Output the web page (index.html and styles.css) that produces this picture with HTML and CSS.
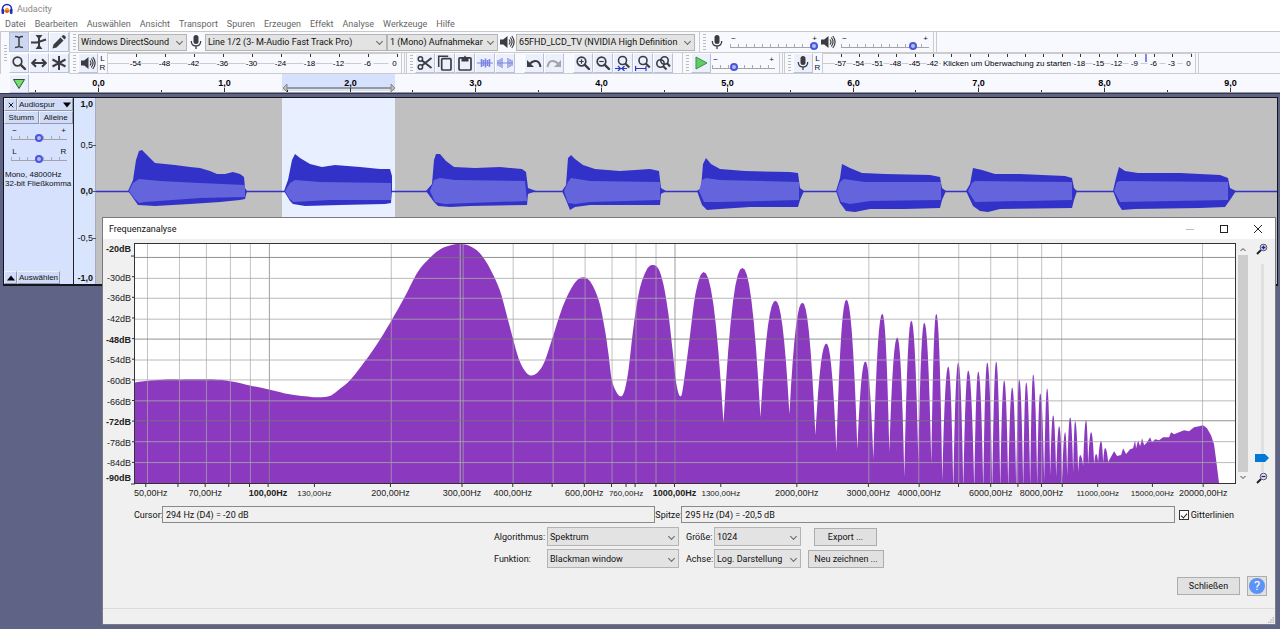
FILE: index.html
```html
<!DOCTYPE html>
<html lang="de">
  <head>
    <meta charset="UTF-8" />
    <title>Audacity</title>
    <link rel="stylesheet" href="styles.css">
  </head>
  <body>
    <svg class="symbols" aria-hidden="true">
      <symbol id="i-text" viewBox="0 0 16 16"><path d="M4 2.500q3 0 4 1.200q1-1.200 4-1.200M4 13.500q3 0 4-1.200q1 1.200 4 1.200M8 3.500v9" fill="none" stroke="currentColor" stroke-width="1.500"/></symbol>
      <symbol id="i-envelope" viewBox="0 0 16 16"><path d="M4.500 1h7L8 5.500zM4.500 15h7L8 10.500z"/><path d="M0 8.500h6l9-3" fill="none" stroke="currentColor" stroke-width="2"/><path d="M8 4v8" stroke="currentColor" stroke-width="2"/></symbol>
      <symbol id="i-pencil" viewBox="0 0 16 16"><path d="M1.500 14.500l1-4 7-7 3 3-7 7zM10.500 2.500l1.300-1.200q.9-.6 1.700.2l1 1q.8.800.1 1.700l-1.200 1.200z"/></symbol>
      <symbol id="i-lens" viewBox="0 0 16 16"><circle cx="6.500" cy="6.500" r="4.300" fill="none" stroke="currentColor" stroke-width="1.700"/><path d="M9.800 9.800l4.200 4.200" stroke="currentColor" stroke-width="2.400" stroke-linecap="round"/></symbol>
      <symbol id="i-shift" viewBox="0 0 16 16"><path d="M1.500 8h13M5 4.200L1.200 8 5 11.800M11 4.200L14.800 8 11 11.800" fill="none" stroke="currentColor" stroke-width="2"/></symbol>
      <symbol id="i-multi" viewBox="0 0 16 16"><path d="M8 1v14M1.500 4.500l13 7M1.500 11.500l13-7" stroke="currentColor" stroke-width="2"/></symbol>
      <symbol id="i-mic" viewBox="0 0 16 16"><rect x="5.500" y="1" width="5" height="9" rx="2.500"/><path d="M3.300 7q0 5 4.700 5t4.700-5M8 12v3" fill="none" stroke="currentColor" stroke-width="1.300"/></symbol>
      <symbol id="i-speaker" viewBox="0 0 16 16"><path d="M1 5.500h3.200L8.500 2v12L4.200 10.500H1z"/><path d="M10 5.500q2 2.500 0 5M11.300 3.500q3.500 4.500 0 9M12.800 2q4.600 6 0 12" fill="none" stroke="currentColor" stroke-width="1.200"/></symbol>
      <symbol id="i-cut" viewBox="0 0 16 16"><path d="M5 5.500l9.500 7.500M5 10.500L14.500 3" stroke="currentColor" stroke-width="1.900"/><circle cx="3.400" cy="4" r="2.200" fill="none" stroke="currentColor" stroke-width="1.500"/><circle cx="3.400" cy="12" r="2.200" fill="none" stroke="currentColor" stroke-width="1.500"/></symbol>
      <symbol id="i-copy" viewBox="0 0 16 16"><path d="M1.700 12V1.200h9.500" fill="none" stroke="currentColor" stroke-width="1.500"/><rect x="4.700" y="3.700" width="9.300" height="11.300" rx="1" fill="none" stroke="currentColor" stroke-width="1.700"/></symbol>
      <symbol id="i-paste" viewBox="0 0 16 16"><rect x="2" y="2.800" width="12" height="12.200" rx="1" fill="none" stroke="currentColor" stroke-width="1.700"/><path d="M4.500 6.500V2.500h2L8 .500l1.500 2h2v4z"/></symbol>
      <symbol id="i-trim" viewBox="0 0 16 16"><path d="M0 8h16" stroke="#7d86e0"/><path d="M4.500 4v8M6.500 5v6M8.500 3.500v9M10.500 5v6M12.500 4v8" stroke="#7d86e0" stroke-width="1.600"/></symbol>
      <symbol id="i-silence" viewBox="0 0 16 16"><path d="M0 8h16" stroke="#7d86e0"/><path d="M1 5v6M3 4v8M5 3v10M11 3v10M13 4v8M15 5v6" stroke="#7d86e0" stroke-width="1.200"/></symbol>
      <symbol id="i-undo" viewBox="0 0 16 16"><path d="M14.500 12Q13.500 5.500 9 6 6 6.300 3 9.500" fill="none" stroke="currentColor" stroke-width="2"/><path d="M1 5v7h7z"/></symbol>
      <symbol id="i-redo" viewBox="0 0 16 16"><path d="M1.500 12Q2.500 5.500 7 6q3 .3 6 3.500" fill="none" stroke="currentColor" stroke-width="2"/><path d="M15 5v7H8z"/></symbol>
      <symbol id="i-zoomin" viewBox="0 0 16 16"><use href="#i-lens"/><path d="M4.300 6.500h4.400M6.500 4.300v4.400" stroke="currentColor" stroke-width="1.200"/></symbol>
      <symbol id="i-zoomout" viewBox="0 0 16 16"><use href="#i-lens"/><path d="M4.300 6.500h4.400" stroke="currentColor" stroke-width="1.200"/></symbol>
      <symbol id="i-zoomsel" viewBox="0 0 16 16"><circle cx="7.500" cy="5.500" r="4" fill="none" stroke="currentColor" stroke-width="1.600"/><path d="M10.300 8.500l4 4" stroke="currentColor" stroke-width="2.200"/><path d="M0 13.500h12M3 11l2.500 2.500L3 16M9.500 11L7 13.500 9.500 16" stroke="#2a35c8" fill="none" stroke-width="1.200"/></symbol>
      <symbol id="i-zoomfit" viewBox="0 0 16 16"><circle cx="8" cy="5.500" r="4" fill="none" stroke="currentColor" stroke-width="1.600"/><path d="M10.800 8.500l4 4" stroke="currentColor" stroke-width="2.200"/><path d="M.6 11v5M11 11v5M1 13.500h10" stroke="#2a35c8" fill="none" stroke-width="1.200"/></symbol>
      <symbol id="i-zoomtoggle" viewBox="0 0 16 16"><circle cx="5.500" cy="8.500" r="3.700" fill="none" stroke="currentColor" stroke-width="1.600"/><circle cx="9.500" cy="5.500" r="3.700" fill="none" stroke="currentColor" stroke-width="1.600"/><path d="M8 11l3.500 3.500M12 8l3 3.500" stroke="currentColor" stroke-width="2"/></symbol>
      <symbol id="i-play" viewBox="0 0 16 16"><path d="M3 2l11 6-11 6z" fill="#5fcf62" stroke="#3f8f45"/></symbol>
      <symbol id="i-pin" viewBox="0 0 16 16"><path d="M2.500 3.500h11L8 12.500z" fill="#6fe06f" stroke="#334c33"/></symbol>
      <symbol id="i-glass" viewBox="0 0 12 12"><path d="M1 11l4-4" stroke="#222" stroke-width="2"/><circle cx="7.500" cy="4.500" r="3.300" fill="#dfe3f7" stroke="#555"/></symbol>
    </svg>

    <header class="titlebar">
      <svg class="logo" viewBox="0 0 12 12"><path d="M1.500 7.500V6a4.500 4.500 0 0 1 9 0v1.500" fill="none" stroke="#1c2bc4" stroke-width="1.600"/><path d="M3 8l1.500-2.500L6 4.500l1.500 1L9 8 7 10H5z" fill="#f6a21c"/><path d="M3.500 7.500h5L7 9.500H5z" fill="#e2461a"/><rect x="0.500" y="6" width="2.600" height="5" rx="1" fill="#1c2bc4"/><rect x="8.900" y="6" width="2.600" height="5" rx="1" fill="#1c2bc4"/></svg>
      <span>Audacity</span>
    </header>
    <nav class="menu">
      <a href="#">Datei</a><a href="#">Bearbeiten</a><a href="#">Auswählen</a><a href="#">Ansicht</a><a href="#">Transport</a><a href="#">Spuren</a><a href="#">Erzeugen</a><a href="#">Effekt</a><a href="#">Analyse</a><a href="#">Werkzeuge</a><a href="#">Hilfe</a>
    </nav>

    <div class="docks">
      <div class="tools">
        <i class="grip"></i>
        <div class="tool-grid">
          <button class="tb active" aria-label="Auswahlwerkzeug"><svg><use href="#i-text"/></svg></button>
          <button class="tb" aria-label="Hüllkurvenwerkzeug"><svg><use href="#i-envelope"/></svg></button>
          <button class="tb" aria-label="Zeichenwerkzeug"><svg><use href="#i-pencil"/></svg></button>
          <button class="tb" aria-label="Zoomwerkzeug"><svg><use href="#i-lens"/></svg></button>
          <button class="tb" aria-label="Verschiebewerkzeug"><svg><use href="#i-shift"/></svg></button>
          <button class="tb" aria-label="Multiwerkzeug"><svg><use href="#i-multi"/></svg></button>
        </div>
      </div>
      <div class="rows">
        <div class="row">
          <i class="grip"></i>
          <span class="pick host"><select aria-label="Audio-Host"><option>Windows DirectSound</option></select></span>
          <svg class="dev"><use href="#i-mic"/></svg>
          <span class="pick input"><select aria-label="Aufnahmegerät"><option>Line 1/2 (3- M-Audio Fast Track Pro)</option></select></span>
          <span class="pick channels"><select aria-label="Aufnahmekanäle"><option>1 (Mono) Aufnahmekanal</option></select></span>
          <svg class="dev"><use href="#i-speaker"/></svg>
          <span class="pick output"><select aria-label="Wiedergabegerät"><option>65FHD_LCD_TV (NVIDIA High Definition Audio)</option></select></span>
          <i class="grip mixer"></i>
          <svg class="dev"><use href="#i-mic"/></svg>
          <span class="slider vol"><b>−</b><b>+</b><input type="range" value="100" aria-label="Aufnahmelautstärke"></span>
          <svg class="dev"><use href="#i-speaker"/></svg>
          <span class="slider vol"><b>−</b><b>+</b><input type="range" value="85" aria-label="Wiedergabelautstärke"></span>
          <i class="stop"></i>
        </div>
        <div class="row">
          <i class="grip"></i>
          <button class="tb" aria-label="Wiedergabepegel"><svg><use href="#i-speaker"/></svg></button>
          <span class="lr">L<br>R</span>
          <svg class="meter play" id="play-meter"></svg>
          <i class="stop"></i>
          <i class="grip"></i>
          <button class="tb" aria-label="Ausschneiden"><svg><use href="#i-cut"/></svg></button>
          <button class="tb" aria-label="Kopieren"><svg><use href="#i-copy"/></svg></button>
          <button class="tb" aria-label="Einfügen"><svg><use href="#i-paste"/></svg></button>
          <button class="tb" aria-label="Zuschneiden"><svg><use href="#i-trim"/></svg></button>
          <button class="tb" aria-label="Stille"><svg><use href="#i-silence"/></svg></button>
          <button class="tb spaced" aria-label="Rückgängig"><svg><use href="#i-undo"/></svg></button>
          <button class="tb off" aria-label="Wiederholen"><svg><use href="#i-redo"/></svg></button>
          <button class="tb spaced" aria-label="Vergrößern"><svg><use href="#i-zoomin"/></svg></button>
          <button class="tb" aria-label="Verkleinern"><svg><use href="#i-zoomout"/></svg></button>
          <button class="tb" aria-label="Auswahl einpassen"><svg><use href="#i-zoomsel"/></svg></button>
          <button class="tb" aria-label="Projekt einpassen"><svg><use href="#i-zoomfit"/></svg></button>
          <button class="tb" aria-label="Zoom umschalten"><svg><use href="#i-zoomtoggle"/></svg></button>
          <i class="grip speed"></i>
          <button class="tb" aria-label="Abspielen"><svg><use href="#i-play"/></svg></button>
          <span class="slider rate"><b>−</b><b>+</b><input type="range" value="32" aria-label="Geschwindigkeit"></span>
          <i class="stop"></i>
          <i class="grip"></i>
          <button class="tb" aria-label="Aufnahmepegel"><svg><use href="#i-mic"/></svg></button>
          <span class="lr">L<br>R</span>
          <svg class="meter rec" id="rec-meter"></svg>
          <i class="stop"></i>
        </div>
      </div>
    </div>

    <div class="timeline">
      <button class="tb" aria-label="Abspielposition"><svg><use href="#i-pin"/></svg></button>
      <svg class="time-ruler" id="time-ruler"></svg>
    </div>

    <main class="project">
      <div class="track">
        <div class="panel">
          <div class="panel-row">
            <button class="close" aria-label="Spur schließen"><svg viewBox="0 0 8 8"><path d="M1 1l6 6M7 1L1 7" stroke="#000" stroke-width="1.200"/></svg></button>
            <button class="name">Audiospur <svg viewBox="0 0 8 5"><path d="M0 0h8L4 5z"/></svg></button>
          </div>
          <div class="panel-row even">
            <button>Stumm</button><button>Alleine</button>
          </div>
          <span class="slider pan"><b>−</b><b>+</b><input type="range" value="50" aria-label="Verstärkung"></span>
          <span class="slider pan"><b>L</b><b>R</b><input type="range" value="50" aria-label="Balance"></span>
          <p>Mono, 48000Hz<br>32-bit Fließkomma</p>
          <div class="panel-row foot">
            <button class="close" aria-label="Einklappen"><svg viewBox="0 0 8 5"><path d="M0 5h8L4 0z"/></svg></button>
            <button class="select">Auswählen</button>
          </div>
        </div>
        <div class="amp">
          <b>1,0</b><span>0,5</span><b>0,0</b><span>-0,5</span><b>-1,0</b>
        </div>
        <svg class="wave" id="wave"></svg>
      </div>
    </main>

    <section class="dialog" role="dialog" aria-labelledby="dialog-title">
      <div class="dialog-bar">
        <h1 id="dialog-title">Frequenzanalyse</h1>
        <button disabled aria-label="Minimieren"><svg viewBox="0 0 10 10"><path d="M1 5.500h8" stroke="#bbb"/></svg></button>
        <button aria-label="Maximieren"><svg viewBox="0 0 10 10"><rect x="1.500" y="1.500" width="7" height="7" fill="none" stroke="#222"/></svg></button>
        <button aria-label="Schließen"><svg viewBox="0 0 10 10"><path d="M1 1l8 8M9 1L1 9" stroke="#222"/></svg></button>
      </div>
      <div class="graph">
        <svg class="db-axis" id="db-axis"></svg>
        <svg class="plot" id="plot" viewBox="135 244 1101 240" preserveAspectRatio="none"></svg>
        <div class="scroll">
          <svg viewBox="0 0 8 5"><path d="M1.500 4L4 1.500 6.500 4" fill="none" stroke="#444"/></svg>
          <i></i>
          <svg viewBox="0 0 8 5"><path d="M1.500 1L4 3.500 6.500 1" fill="none" stroke="#444"/></svg>
        </div>
        <div class="zoomer">
          <svg viewBox="0 0 12 12"><use href="#i-glass"/><path d="M5.500 4.500h4M7.500 2.500v4" stroke="#2020b0" stroke-width="1.300"/></svg>
          <input type="range" value="5" aria-label="Zoom">
          <svg viewBox="0 0 12 12"><use href="#i-glass"/><path d="M5.500 4.500h4" stroke="#2020b0" stroke-width="1.300"/></svg>
        </div>
        <svg class="hz-axis" id="hz-axis"></svg>
      </div>
      <div class="readout">
        <label for="cursor">Cursor:</label><input type="text" id="cursor" value="294 Hz (D4) = -20 dB" readonly>
        <label for="peak">Spitze:</label><input type="text" id="peak" value="295 Hz (D4) = -20,5 dB" readonly>
        <input type="checkbox" id="grid" checked><label for="grid">Gitterlinien</label>
      </div>
      <div class="options">
        <label for="algo">Algorithmus:</label>
        <span class="pick"><select id="algo"><option>Spektrum</option></select></span>
        <label for="size">Größe:</label>
        <span class="pick"><select id="size"><option>1024</option></select></span>
        <button class="btn">Export ...</button>
        <label for="func">Funktion:</label>
        <span class="pick"><select id="func"><option>Blackman window</option></select></span>
        <label for="axis">Achse:</label>
        <span class="pick"><select id="axis"><option>Log. Darstellung</option></select></span>
        <button class="btn wide">Neu zeichnen ...</button>
      </div>
      <div class="actions">
        <button class="btn">Schließen</button>
        <button class="btn help" aria-label="Hilfe"><span>?</span></button>
      </div>
      <div class="status"><svg viewBox="0 0 8 8"><path d="M6 0h2v2H6zM3 3h2v2H3zM6 3h2v2H6zM0 6h2v2H0zM3 6h2v2H3zM6 6h2v2H6z" fill="#bbb"/></svg></div>
    </section>

    <script src="script.js"></script>
  </body>
</html>
```

FILE: styles.css
```css
* {
  box-sizing: border-box;
}
body {
  margin: 0;
  height: 100vh;
  display: flex;
  flex-direction: column;
  overflow: hidden;
  position: relative;
  font-family: Roboto, "Open Sans", sans-serif;
  font-size: 9px;
  line-height: 12px;
  color: #111;
  background: #fff;
}
button,
input,
select {
  font: inherit;
  color: inherit;
  margin: 0;
  padding: 0;
  border: 0;
  border-radius: 0;
  background: none;
}
svg {
  display: block;
  flex: none;
}
.symbols {
  position: absolute;
  width: 0;
  height: 0;
}

/* window title + menu */
.titlebar {
  display: flex;
  align-items: center;
  gap: 4px;
  height: 17px;
  padding-left: 1px;
  color: #888;
}
.logo {
  width: 12px;
  height: 12px;
}
.menu {
  display: flex;
  gap: 9px;
  height: 14px;
  padding-left: 5px;
  align-items: center;
}
.menu a {
  color: #666;
  text-decoration: none;
}

/* toolbars */
.docks {
  display: flex;
  border-top: 1px solid #c8c8cc;
  background: #f8f9ff;
}
.tools {
  display: flex;
}
.tool-grid {
  display: grid;
  grid-template-columns: repeat(3, 20px);
  grid-auto-rows: 21px;
}
.rows {
  flex: 1;
  min-width: 0;
}
.row {
  display: flex;
  align-items: center;
  height: 21px;
  border-bottom: 1px solid #ccc;
}
.grip {
  flex: none;
  align-self: stretch;
  width: 9px;
  background: repeating-linear-gradient(#bbb 0 1px, transparent 1px 3px) center / 3px 16px no-repeat;
  border-left: 1px solid #ccc;
}
.grip.mixer {
  margin-left: 4px;
}
.grip.speed {
  margin-left: 9px;
}
.stop {
  flex: none;
  align-self: stretch;
  width: 4px;
  margin: 0 1px 0 3px;
  border-left: 1px solid #ccc;
  border-right: 1px solid #ccc;
}
.tb {
  flex: none;
  width: 20px;
  height: 20px;
  display: grid;
  place-items: center;
  background: #ebf0fc;
  border: 1px solid #fff;
  border-right-color: #b9c2d8;
  border-bottom-color: #b9c2d8;
  color: #3c3c40;
  fill: currentColor;
}
.tb svg {
  width: 16px;
  height: 16px;
}
.tb.active {
  background: #ccd8f2;
  border-color: #b9c2d8;
}
.tb.off {
  color: #a4a4a8;
}
.tb.spaced {
  margin-left: 9px;
}
.dev {
  width: 16px;
  height: 16px;
  margin: 0 1px;
  color: #3c3c40;
  fill: currentColor;
}
.pick {
  position: relative;
  flex: none;
  height: 17px;
}
.pick select {
  appearance: none;
  width: 100%;
  height: 100%;
  padding: 0 14px 0 2px;
  background: #e3e3e3;
  border: 1px solid #b4b4b4;
}
.pick::after {
  content: "";
  position: absolute;
  right: 5px;
  top: 5px;
  width: 4px;
  height: 4px;
  border: solid #666;
  border-width: 0 1px 1px 0;
  transform: rotate(45deg);
  pointer-events: none;
}
.host {
  width: 109px;
}
.input {
  width: 182px;
}
.channels {
  width: 111px;
}
.output {
  width: 179px;
}

/* sliders with end labels and tick marks */
.slider {
  flex: none;
  display: flex;
  flex-wrap: wrap;
  justify-content: space-between;
  font: 8px/7px "Liberation Sans", sans-serif;
}
.slider b {
  width: 7px;
  font-weight: normal;
  text-align: center;
}
.slider input {
  appearance: none;
  width: 100%;
  height: 8px;
  background: linear-gradient(#a4a4a8, #a4a4a8) 0 5px / 100% 1px no-repeat,
    repeating-linear-gradient(90deg, #aaa 0 1px, transparent 1px 8px) 0 2px / 100% 3px no-repeat;
}
.slider input::-webkit-slider-thumb {
  appearance: none;
  width: 8px;
  height: 8px;
  border: 2px solid #4a55e0;
  border-radius: 4px;
  background: #b4bcf4;
}
.vol {
  width: 93px;
  padding: 0 1px 0 4px;
}
.rate {
  width: 65px;
  padding: 0 1px;
}

/* meters */
.lr {
  width: 9px;
  font: 8px/9px "Liberation Sans", sans-serif;
  text-align: center;
}
.meter {
  height: 20px;
  border: solid #ccc;
  border-width: 1px 0 0 1px;
  font: 8px "Liberation Sans", sans-serif;
}
.play {
  width: 291px;
}
.rec {
  width: 370px;
}

.timeline {
  display: flex;
  height: 19px;
  padding-left: 9px;
  background: #f8f9ff;
}
.timeline .tb {
  height: 19px;
}
.time-ruler {
  flex: 1;
  height: 19px;
  font: bold 9px "Liberation Sans", sans-serif;
}

/* track */
.project {
  flex: 1;
  padding: 3px 2px 0 3px;
  background: #5f6486;
  border-top: 1px solid #333747;
}
.track {
  display: flex;
  height: 189px;
  border: 1px solid #15151c;
  border-bottom-width: 2px;
  background: #c0c0c0;
}
.panel {
  width: 70px;
  display: flex;
  flex-direction: column;
  background: #d5e1fd;
  border-right: 1px solid #222;
  font: 8px/12px "Liberation Sans", sans-serif;
}
.panel-row {
  display: flex;
}
.panel-row button {
  height: 13px;
  padding: 0;
  overflow: hidden;
  white-space: nowrap;
  background: #cfdbf7;
  border: 1px solid #e9effd;
  border-right-color: #8f98ae;
  border-bottom-color: #8f98ae;
}
.panel-row .close {
  width: 13px;
  display: grid;
  place-items: center;
}
.panel-row svg {
  width: 8px;
  height: 6px;
}
.panel-row .name {
  flex: 1;
  display: flex;
  align-items: center;
  justify-content: space-between;
  padding: 0 1px;
}
.even button {
  flex: 1;
}
.pan {
  width: 56px;
  margin: 3px auto 0 7px;
}
.pan + .pan {
  margin-top: 6px;
}
.panel p {
  margin: 7px 0 0 1px;
  line-height: 9px;
  white-space: nowrap;
}
.foot {
  margin-top: auto;
}
.panel-row .select {
  width: 43px;
}
.amp {
  width: 22px;
  display: grid;
  grid-template-rows: 1fr 2fr 2fr 2fr 1fr;
  align-items: center;
  padding-right: 3px;
  background: linear-gradient(90deg, #d9e4fd 0 21px, #aab 21px);
  font: 9px/12px "Liberation Sans", sans-serif;
  text-align: right;
  white-space: nowrap;
}
.amp :first-child {
  align-self: start;
}
.amp :last-child {
  align-self: end;
}
.amp :not(:first-child):not(:last-child)::after {
  content: "";
  display: inline-block;
  width: 3px;
  height: 1px;
  margin-right: -3px;
  background: #555;
  vertical-align: middle;
}
.wave {
  flex: 1;
  min-width: 0;
  height: 100%;
}

/* frequency analysis window */
.dialog {
  position: absolute;
  inset: 217px 4px 4px 102px;
  display: flex;
  flex-direction: column;
  background: #f0f0f0;
  border: 1px solid #7a7a80;
}
.dialog-bar {
  display: flex;
  align-items: center;
  height: 21px;
  padding-left: 6px;
  background: #fff;
}
.dialog-bar h1 {
  flex: 1;
  margin: 0;
  font-size: 9px;
  font-weight: normal;
}
.dialog-bar button {
  width: 34px;
  height: 21px;
  display: grid;
  place-items: center;
}
.dialog-bar svg {
  width: 10px;
  height: 10px;
}
.graph {
  flex: 1;
  min-height: 0;
  display: grid;
  grid-template-columns: 31px 1fr 13px 26px;
  grid-template-rows: 1fr 17px;
  padding-top: 4px;
}
.graph text {
  fill: #222;
}
.db-axis {
  width: 100%;
  height: 100%;
  font: 9px "Liberation Sans", sans-serif;
  overflow: visible;
}
.plot {
  width: 100%;
  height: 100%;
  min-height: 0;
  background: #fff;
  border: 1px solid #333;
}
.hz-axis {
  grid-column: 2;
  width: 100%;
  height: 17px;
  font: 9px "Liberation Sans", sans-serif;
  overflow: visible;
}
.hz-axis .minor {
  font-size: 8px;
}
.bold {
  font-weight: bold;
}
.scroll {
  display: flex;
  flex-direction: column;
  align-items: center;
  padding: 4px 1px;
}
.scroll svg {
  width: 8px;
  height: 5px;
}
.scroll i {
  flex: 1;
  width: 10px;
  margin: 3px 0;
  background: #cdcdcd;
}
.zoomer {
  display: flex;
  flex-direction: column;
  align-items: center;
  justify-content: space-between;
}
.zoomer svg {
  width: 12px;
  height: 12px;
}
.zoomer input {
  appearance: none;
  writing-mode: vertical-lr;
  direction: rtl;
  flex: 1;
  min-height: 0;
  width: 14px;
  margin: 9px 0 0;
  background: linear-gradient(#e0e0e0, #e0e0e0) center / 3px 100% no-repeat;
}
.zoomer input::-webkit-slider-thumb {
  appearance: none;
  width: 14px;
  height: 8px;
  background: #0078d7;
  clip-path: polygon(0 0, 10px 0, 100% 50%, 10px 100%, 0 100%);
}
.readout {
  display: flex;
  align-items: center;
  margin-top: 5px;
  padding: 0 101px 0 31px;
  white-space: nowrap;
}
.readout label {
  flex: none;
  width: 28px;
}
.readout input[type="text"] {
  flex: 1;
  min-width: 0;
  height: 17px;
  padding: 0 3px;
  border: 1px solid #8a8a8a;
}
.readout input[type="text"] + label {
  width: 26px;
}
.readout input[type="checkbox"] {
  appearance: none;
  flex: none;
  width: 10px;
  height: 10px;
  margin: 0 2px 0 4px;
  border: 1px solid #333;
  background: #fff;
  display: grid;
  place-items: center;
}
.readout input[type="checkbox"]:checked::before {
  content: "";
  width: 3px;
  height: 5px;
  border: solid #222;
  border-width: 0 1px 1px 0;
  transform: rotate(40deg);
}
.readout input[type="checkbox"] + label {
  width: auto;
  margin-right: -60px;
}
.options {
  display: grid;
  grid-template-columns: 53px 132px 35px 87px 83px;
  grid-auto-rows: 19px;
  row-gap: 3px;
  justify-content: center;
  align-items: center;
  margin-top: 4px;
}
.options .pick {
  height: 19px;
}
.options .pick + label {
  padding-left: 7px;
}
.options .pick::after {
  top: 7px;
}
.btn {
  width: 63px;
  height: 18px;
  background: #e1e1e1;
  border: 1px solid #adadad;
}
.options .btn {
  margin-left: 13px;
}
.options .btn.wide {
  width: 76px;
  margin-left: 7px;
}
.actions {
  display: flex;
  align-items: center;
  justify-content: flex-end;
  gap: 7px;
  margin-top: 8px;
  padding-right: 8px;
}
.btn.help {
  width: 20px;
  height: 20px;
  display: grid;
  place-items: center;
}
.help span {
  width: 16px;
  height: 16px;
  border-radius: 8px;
  background: #5c93f7;
  color: #fff;
  font-size: 13px;
  line-height: 16px;
}
.status {
  display: flex;
  justify-content: flex-end;
  align-items: flex-end;
  height: 16px;
  margin-top: 12px;
  padding: 1px;
  border-top: 1px solid #dcdcdc;
}
.status svg {
  width: 6px;
  height: 6px;
}
```

FILE: script.js
```js
const svg = (id, markup) => {
  document.getElementById(id).innerHTML = markup;
};
const line = (x1, y1, x2, y2, color, extra = "") =>
  `<line x1="${x1}" y1="${y1}" x2="${x2}" y2="${y2}" stroke="${color}" ${extra}/>`;
const text = (x, y, label, extra = 'text-anchor="middle"') =>
  `<text x="${x}" y="${y}" ${extra}>${label}</text>`;

// --- Pegelanzeigen ---
function drawMeter(id, from, step, left, pxPerDb, skip) {
  let out = line(0, 9.5, "100%", 9.5, "#ccc");
  for (let db = from; db <= 0; db += step) {
    const x = Math.round(left + (db - from) * pxPerDb) + 0.5;
    out += line(x, 0, x, 3, "#333");
    if (skip && db > -42 && db < -18) continue;
    const shift = db === 0 ? -3 : -1;
    out += `<rect x="${x - 6 + shift}" y="5" width="12" height="8" fill="#f8f9ff"/>`;
    out += text(x + shift, 12, db);
  }
  if (skip) {
    out += `<rect x="118" y="4" width="131" height="11" fill="#f8f9ff"/>`;
    out += text(184, 12, "Klicken um Überwachung zu starten");
    out += line(323, 0, 323, 8, "#5a5ae6", 'stroke-width="1.5"');
  }
  svg(id, out);
}
drawMeter("play-meter", -54, 6, 28, 4.83, false);
drawMeter("rec-meter", -57, 3, 18, 6.135, true);

// --- Zeitleiste ---
const second = 125.75;
function drawRuler() {
  let out = '<rect x="253" y="0" width="113" height="17" fill="#d5e1fd"/>';
  out += line(256, 14, 364, 14, "#999", 'stroke-width="2"');
  out += '<path d="M258 10l-4 4 4 4zM362 10l4 4-4 4z" fill="#bbb" stroke="#888"/>';
  for (let i = -1; i < 20; i++) {
    const x = Math.round(69 + (i * second) / 2) + 0.5;
    out += line(x, i % 2 ? 16 : 14, x, 18, "#333");
    if (i % 2 === 0) out += text(x, 12, `${i / 2},0`);
  }
  out += line(0, 18.5, "100%", 18.5, "#999");
  svg("time-ruler", out);
}
drawRuler();

// --- Wellenform: je Ton Spitze oben/unten, RMS oben/unten ---
const notes = [
  {
    top: "128,191 133,180 136,160 139,151 142,150 146,154 155,163 175,165 190,167 200,168 210,171 217,174 225,174 233,172 240,174 244,177 245,188 247,191",
    bottom: "245,199 240,200 220,202 190,204 155,206 138,205 131,195",
    rmsTop: "129,191 133,183 139,179 160,181 200,183 245,185",
    rmsBottom: "245,197 200,198 145,202 139,203 134,198",
  },
  {
    top: "284,191 288,180 292,160 295,154 300,158 310,164 322,167 335,165 360,167 380,169 390,169 392,176 392,190",
    bottom: "391,203 385,204 340,205 305,206 293,204 290,201",
    rmsTop: "285,191 290,183 295,180 320,182 391,183",
    rmsBottom: "391,200 330,200 293,202 289,198",
  },
  {
    top: "426,191 432,184 434,160 436,154 440,154 446,161 454,167 475,168 500,167 522,169 526,172 528,188 536,191",
    bottom: "528,194 527,205 470,206 450,207 438,206 434,202",
    rmsTop: "430,191 434,180 440,178 455,180 525,181",
    rmsBottom: "527,201 470,203 445,204 435,202",
  },
  {
    top: "562,191 566,185 568,158 571,155 575,159 583,165 595,169 620,171 650,169 659,171 661,188 666,191",
    bottom: "661,194 660,205 590,205 575,207 570,210 566,200",
    rmsTop: "564,191 568,182 571,178 590,181 660,182",
    rmsBottom: "660,200 590,202 575,204 568,203",
  },
  {
    top: "697,191 701,188 703,164 706,158 711,164 720,169 745,171 790,172 798,173 800,188 804,191",
    bottom: "800,200 798,207 750,207 720,209 707,210 702,205",
    rmsTop: "699,191 702,180 706,178 720,180 799,182",
    rmsBottom: "799,200 720,202 704,202",
  },
  {
    top: "836,191 840,178 842,164 850,168 862,173 885,174 930,175 940,177 942,188 946,191",
    bottom: "942,200 940,208 905,209 870,209 855,212 846,211 840,203",
    rmsTop: "837,191 840,182 844,179 865,182 941,182",
    rmsBottom: "941,200 870,201 850,204 841,202",
  },
  {
    top: "966,191 970,184 973,168 982,170 995,174 1020,174 1065,176 1072,178 1074,188 1077,191",
    bottom: "1074,200 1072,208 1000,209 988,212 980,211 973,206",
    rmsTop: "968,191 972,183 975,181 1072,182",
    rmsBottom: "1072,200 975,202",
  },
  {
    top: "1113,191 1116,178 1119,167 1125,171 1138,173 1180,173 1220,175 1228,178 1230,188 1236,191",
    bottom: "1230,200 1225,207 1200,208 1135,209 1122,210 1118,204",
    rmsTop: "1114,191 1117,182 1120,181 1228,182",
    rmsBottom: "1228,200 1120,202",
  },
];
function drawWave() {
  let out = '<rect x="186" y="0" width="113" height="100%" fill="#e8f0ff"/>';
  out += '<g transform="translate(-96 -98)">';
  out += line(96, 191.5, 1278, 191.5, "#3232c8", 'stroke-width="1.5"');
  notes.forEach((n) => {
    out += `<polygon points="${n.top} ${n.bottom}" fill="#3232c8"/>`;
    out += `<polygon points="${n.rmsTop} ${n.rmsBottom}" fill="#6464dc"/>`;
  });
  svg("wave", out + "</g>");
}
drawWave();

// --- Spektrum ---
// low end is given point by point, harmonics as alternating peak / valley
const low = [
  [135, 383], [150, 381], [165, 380], [180, 380], [215, 380], [232, 382], [250, 386], [269, 390],
  [290, 395], [305, 397], [317, 398], [329, 397], [338, 391], [350, 381], [362, 366], [375, 348],
  [391, 322], [405, 297], [418, 272], [430, 258], [441, 249], [452, 245], [461, 244], [470, 246],
  [480, 253], [490, 268], [500, 290], [507, 315], [513, 338], [519, 359], [525, 371], [531, 376],
  [538, 373], [545, 362], [553, 338], [562, 310], [572, 288], [581, 278], [590, 281], [599, 300],
  [605, 328], [609, 355], [612, 379], [616, 391], [621, 397], [625, 391], [629, 370], [634, 327],
  [640, 290], [647, 270], [653, 265], [659, 269], [664, 285], [669, 315], [673, 350], [677, 385],
  [681, 397], [684, 385], [690, 340], [695, 300], [700, 278], [704, 272],
];
const harmonics = [
  [704, 272], [724, 424], [743, 268], [761, 418], [776, 301], [790, 415], [803, 303], [816, 436],
  [827, 344], [837, 452], [847, 300], [858, 450], [866, 362], [874, 460], [883, 314], [890, 453],
  [898, 338], [905, 478], [912, 321], [919, 461], [925, 323], [932, 465], [937, 314], [943, 482],
  [949, 367], [954, 490], [959, 363], [964, 490], [969, 371], [975, 490], [979, 372], [984, 490],
  [988, 363], [993, 490], [997, 362], [1001, 490], [1005, 381], [1009, 490], [1013, 388],
  [1017, 490], [1020, 380], [1024, 490], [1027, 383], [1031, 488], [1034, 375], [1038, 486],
  [1041, 394], [1045, 482], [1048, 389], [1051, 477], [1054, 416], [1057, 478], [1060, 427],
  [1063, 480], [1066, 433], [1068, 477], [1071, 418], [1074, 474], [1076, 422], [1079, 473],
  [1081, 456], [1084, 467], [1087, 421], [1089, 466], [1092, 433], [1095, 465], [1097, 455],
  [1099, 463], [1102, 442], [1104, 464], [1106, 449], [1109, 463],
];
const high = [
  [1115, 452], [1118, 457], [1122, 456], [1124, 449], [1127, 455], [1131, 450], [1134, 449],
  [1136, 441], [1137, 449], [1139, 441], [1141, 447], [1143, 439], [1145, 446], [1148, 443],
  [1151, 438], [1153, 443], [1156, 440], [1160, 441], [1164, 438], [1170, 438], [1172, 433],
  [1175, 435], [1180, 433], [1185, 431], [1190, 432], [1195, 428], [1200, 427], [1204, 426],
  [1208, 429], [1212, 436], [1215, 445], [1217, 460], [1220, 484],
];

function smooth(points) {
  let d = `M${points[0]}`;
  for (let i = 0; i < points.length - 1; i++) {
    const p0 = points[i - 1] || points[i];
    const [x1, y1] = points[i];
    const [x2, y2] = points[i + 1];
    const p3 = points[i + 2] || points[i + 1];
    d += `C${x1 + (x2 - p0[0]) / 6} ${y1 + (y2 - p0[1]) / 6} ${x2 - (p3[0] - x1) / 6} ${y2 - (p3[1] - y1) / 6} ${x2} ${y2}`;
  }
  return d;
}

function lobes(points) {
  let d = "";
  for (let i = 0; i < points.length - 1; i++) {
    const [x1, y1] = points[i];
    const [x2, y2] = points[i + 1];
    for (let s = 1; s <= 8; s++) {
      const t = s / 8;
      // flat at the peak, steep towards the valley
      const k = y1 < y2 ? Math.pow(t, 2.2) : 1 - Math.pow(1 - t, 2.2);
      d += `L${x1 + (x2 - x1) * t} ${y1 + (y2 - y1) * k}`;
    }
  }
  return d;
}

const hzX = (f) => 269 + 406 * Math.log10(f / 100);
const dbY = (db) => 257 + ((-24 - db) * 20.55) / 6;

function drawPlot() {
  const d =
    smooth(low) + lobes(harmonics) + high.map((p) => `L${p}`).join("") + "L1220 484L135 484Z";
  let out = `<path d="${d}" fill="#8b3abf"/>`;
  const fixed = 'vector-effect="non-scaling-stroke"';
  const freqs = [50, 60, 70, 80, 90, 20000];
  for (let i = 1; i < 10; i++) freqs.push(i * 100, i * 1000);
  freqs.forEach((f) => {
    const x = Math.round(hzX(f)) + 0.5;
    const major = f === 100 || f === 1000;
    out += line(x, 244, x, 484, major ? "#888" : "#aaa", `opacity="${major ? 0.8 : 0.7}" ${fixed}`);
  });
  out += line(460.5, 244, 460.5, 484, "#aaa", fixed);
  for (let db = -24; db > -90; db -= 6) {
    const y = Math.round(dbY(db)) + 0.5;
    const major = db % 24 === 0;
    out += line(135, y, 1236, y, major ? "#777" : "#aaa", `opacity="0.8" ${fixed}`);
  }
  svg("plot", out);
}
drawPlot();

function drawAxes() {
  const pctX = (x) => `${((x - 135) / 1101) * 100}%`;
  const pctY = (y) => `${((y - 244) / 240) * 100}%`;
  const end = 'text-anchor="end"';
  let db = text(28, pctY(253), "-20dB", `${end} class="bold"`);
  db += text(28, pctY(481), "-90dB", `${end} class="bold"`);
  db += line(28, pctY(257), 32, pctY(257), "#333") + line(28, "100%", 32, "100%", "#333");
  for (let v = -30; v > -90; v -= 6) {
    db += text(28, pctY(dbY(v) + 4), `${v}dB`, v % 24 ? end : `${end} class="bold"`);
    db += line(29, pctY(dbY(v)), 32, pctY(dbY(v)), "#333");
  }
  svg("db-axis", db);

  const labels = [50, 70, 100, 130, 200, 300, 400, 600, 760, 1000, 1300, 2000, 3000, 4000, 6000, 8000, 11000, 15000, 20000];
  const minor = [130, 760, 1300, 11000, 15000];
  const ticks = [60, 80, 90, 500, 700, 800, 900, 5000, 7000, 9000];
  let hz = "";
  labels.concat(ticks).forEach((f) => {
    hz += line(pctX(hzX(f)), 0, pctX(hzX(f)), 3, "#333");
  });
  labels.forEach((f) => {
    const cls = minor.includes(f) ? "minor" : f === 100 || f === 1000 ? "bold" : "";
    // first label is pushed right so that it starts inside the plot
    const x = f === 50 ? hzX(f) + 5 : hzX(f);
    hz += text(pctX(x), 12, `${f},00Hz`, `text-anchor="middle" class="${cls}"`);
  });
  svg("hz-axis", hz);
}
drawAxes();
```
